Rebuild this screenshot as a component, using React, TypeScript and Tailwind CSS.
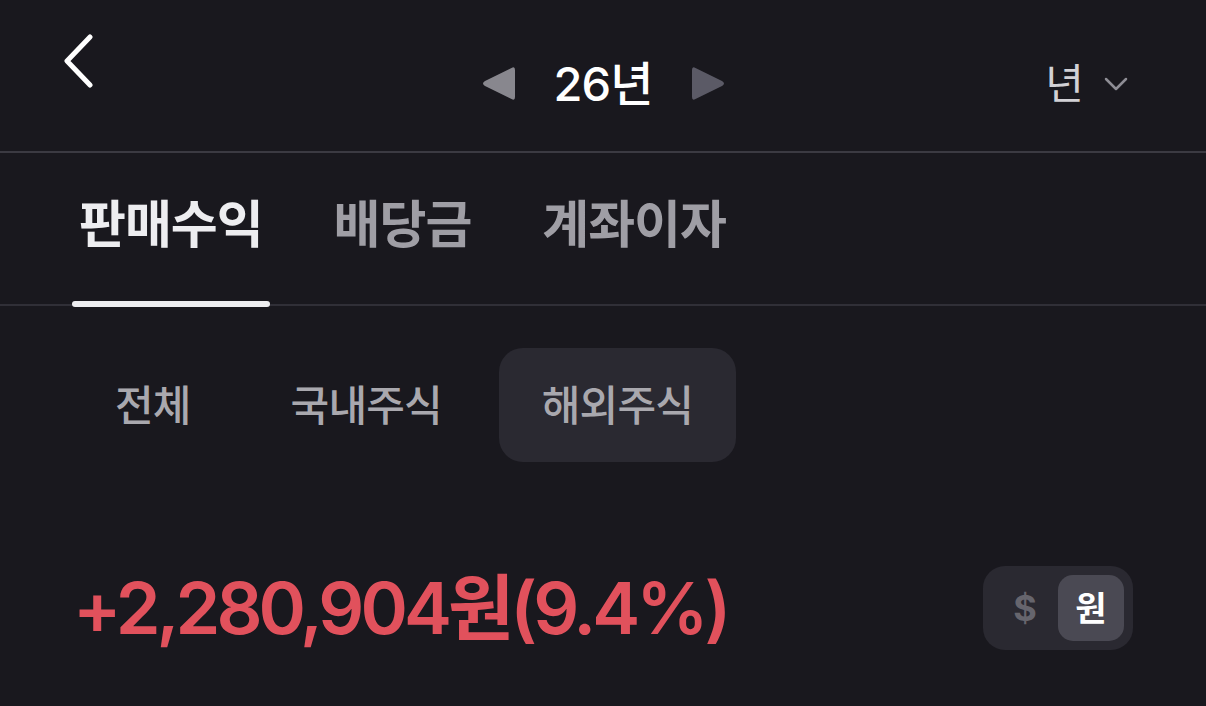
import { useState } from "react";

const tabs = ["판매수익", "배당금", "계좌이자"];
const markets = ["전체", "국내주식", "해외주식"];

function BackIcon() {
  return (
    <svg width="34" height="54" viewBox="0 0 34 54" fill="none">
      <path d="M29 3 L6 27 L29 51" stroke="#ffffff" strokeWidth="5" strokeLinecap="round" strokeLinejoin="round" />
    </svg>
  );
}

function Triangle({ dir, color }: { dir: "left" | "right"; color: string }) {
  const d =
    dir === "left"
      ? "M33 4 Q33 0 29.5 2 L3 15 Q-1 17.5 3 20 L29.5 33 Q33 35 33 31 Z"
      : "M1 4 Q1 0 4.5 2 L31 15 Q35 17.5 31 20 L4.5 33 Q1 35 1 31 Z";
  return (
    <svg width="34" height="35" viewBox="0 0 34 35">
      <path d={d} fill={color} />
    </svg>
  );
}

function ChevronDown() {
  return (
    <svg width="24" height="16" viewBox="0 0 24 16" fill="none">
      <path d="M2 3 L12 13 L22 3" stroke="#8e8d95" strokeWidth="2.5" strokeLinecap="round" strokeLinejoin="round" />
    </svg>
  );
}

export default function App() {
  const [tab, setTab] = useState(0);
  const [market, setMarket] = useState(2);
  const [won, setWon] = useState(true);

  return (
    <div className="w-[1206px] h-[706px] overflow-hidden bg-[#19181e] font-['Inter','Noto_Sans_CJK_KR',sans-serif]">
      {/* Top bar */}
      <header className="grid grid-cols-[1fr_auto_1fr] h-[153px] border-b-2 border-[#3b3a42]">
        <div className="pl-[61px] pt-[34px]">
          <BackIcon />
        </div>
        <div className="flex items-center gap-[38px] pt-[16px]">
          <Triangle dir="left" color="#88878e" />
          <span className="text-[47px] font-medium text-white tracking-[-0.02em] leading-none">26년</span>
          <Triangle dir="right" color="#5b5a66" />
        </div>
        <div className="flex items-center justify-end gap-[20px] pr-[78px] pt-[16px]">
          <span className="text-[42px] text-[#d2d1d6] leading-none">년</span>
          <ChevronDown />
        </div>
      </header>

      {/* Income type tabs */}
      <nav className="flex gap-[57px] h-[153px] px-[72px] border-b-2 border-[#302f37]">
        {tabs.map((t, i) => (
          <button
            key={t}
            onClick={() => setTab(i)}
            className="flex flex-col justify-between items-stretch -mb-[3px]"
          >
            <span
              className={`px-[7px] pt-[46px] text-[51px] font-bold tracking-[-0.02em] leading-none ${
                i === tab ? "text-[#ededf0]" : "text-[#9f9ea5]"
              }`}
            >
              {t}
            </span>
            <span className={`h-[6px] rounded-full ${i === tab ? "bg-[#ededf0]" : "bg-transparent"}`} />
          </button>
        ))}
      </nav>

      {/* Market filter */}
      <div className="flex gap-[14px] px-[72px] pt-[42px]">
        {markets.map((m, i) => (
          <button
            key={m}
            onClick={() => setMarket(i)}
            className={`h-[114px] px-[43px] rounded-[24px] text-[42px] font-medium tracking-[-0.02em] text-[#a9a8ae] ${
              i === market ? "bg-[#2a2931]" : ""
            }`}
          >
            {m}
          </button>
        ))}
      </div>

      {/* Total */}
      <div className="flex items-center justify-between px-[73px] pt-[104px]">
        <span className="text-[72px] font-semibold tracking-[-0.055em] text-[#e1515c] leading-none">
          +2,280,904원(9.4%)
        </span>
        <div className="flex items-center h-[84px] p-[9px] rounded-[22px] bg-[#2a2931]">
          <button
            onClick={() => setWon(false)}
            className={`w-[66px] h-[66px] rounded-[15px] text-[36px] font-bold ${
              won ? "text-[#66656d]" : "bg-[#4a4953] text-white"
            }`}
          >
            $
          </button>
          <button
            onClick={() => setWon(true)}
            className={`w-[66px] h-[66px] rounded-[15px] text-[34px] font-bold ${
              won ? "bg-[#4a4953] text-white" : "text-[#66656d]"
            }`}
          >
            원
          </button>
        </div>
      </div>
    </div>
  );
}
